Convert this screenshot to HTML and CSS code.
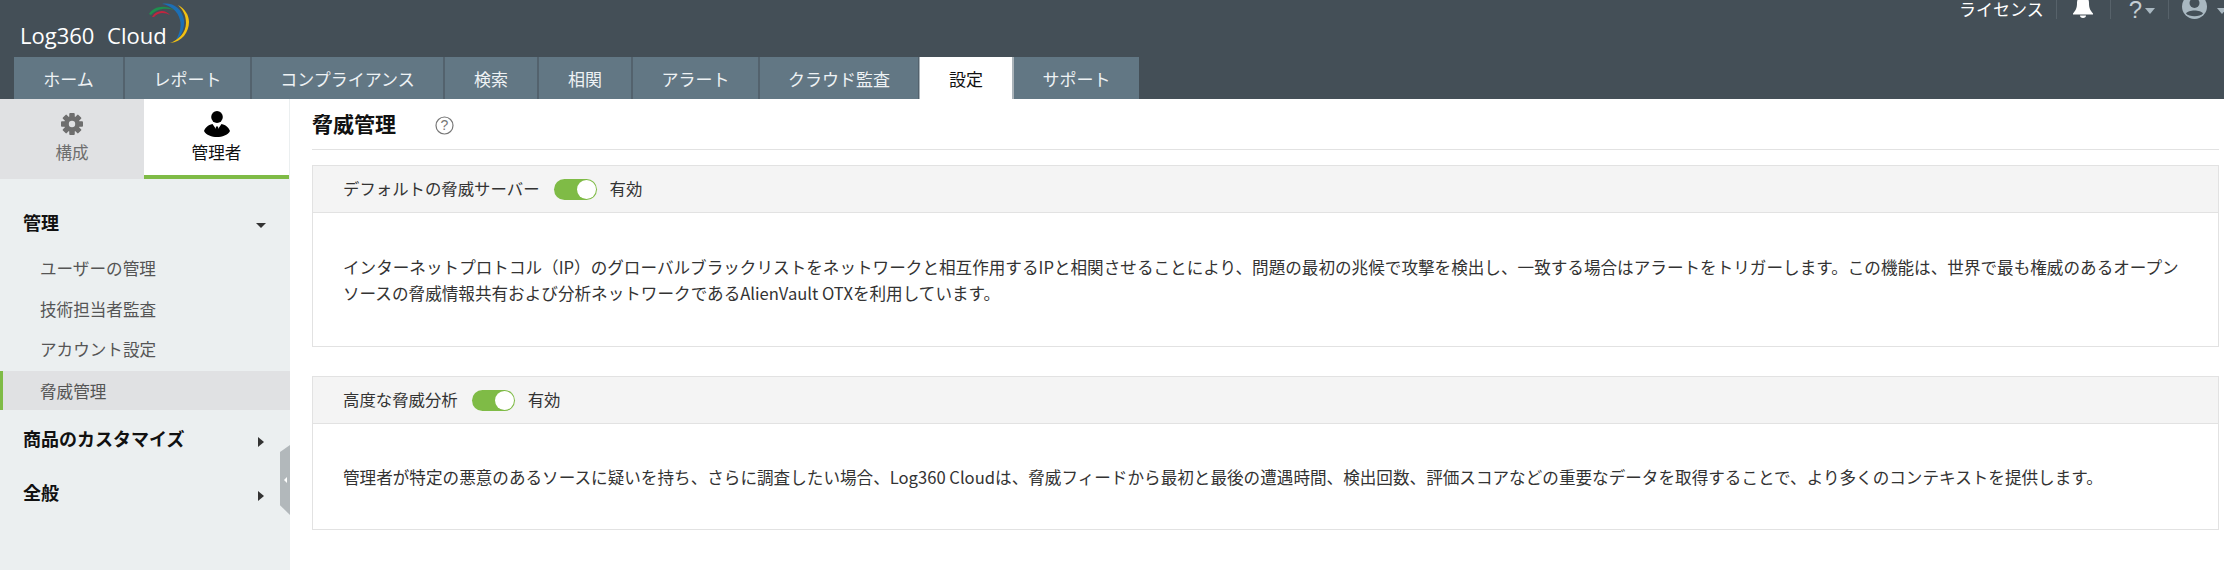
FILE: index.html
```html
<!DOCTYPE html>
<html lang="ja">
<head>
<meta charset="utf-8">
<title>Log360 Cloud</title>
<link rel="stylesheet" href="styles.css">
</head>
<body>
<header class="topbar">
  <div class="brand-row">
    <div class="logo">
      <span class="logo-text">Log360 Cloud</span>
      <svg class="logo-arc" width="60" height="50" viewBox="0 0 60 50">
        <path d="M9 14C13 7 24 4 34 10C24 7 15 10 11 15Z" fill="#1f8f4e"/>
        <path d="M12 17C16 10 25 9 30 15C25 12 18 12 14 17Z" fill="#c2253f"/>
        <path d="M22 4C32 2 42 8 44 20C45 28 41 37 35 42C39 35 42 27 40 20C38 11 30 5 22 4Z" fill="#1c6fb5"/>
        <path d="M38 5C45 9 49 15 49 22C49 32 42 42 30 43C38 40 46 33 46 23C46 15 43 10 38 5Z" fill="#f2c011"/>
      </svg>
    </div>
    <div class="top-actions">
      <span class="license">ライセンス</span>
      <span class="action-sep sep-a"></span>
      <svg class="bell" width="22" height="18" viewBox="0 0 22 18">
        <path d="M11 -4C15 -4 17 -1 17 3C17 8 18 10 21 13.500V14.500H1V13.500C4 10 5 8 5 3C5 -1 7 -4 11 -4Z" fill="#fff"/>
        <path d="M8 15.500H14C14 17 13 18 11 18C9 18 8 17 8 15.500Z" fill="#fff"/>
      </svg>
      <span class="action-sep sep-b"></span>
      <span class="help">?</span>
      <span class="caret"></span>
      <span class="action-sep sep-c"></span>
      <svg class="avatar" width="25" height="19" viewBox="0 0 25 19">
        <circle cx="12.500" cy="6.500" r="12.500" fill="#a9b8c1"/>
        <circle cx="12.500" cy="3" r="5" fill="#444f57"/>
        <path d="M4 13.500C6 9.500 19 9.500 21 13.500C18 17 7 17 4 13.500Z" fill="#444f57"/>
      </svg>
      <span class="caret caret-last"></span>
    </div>
  </div>
  <nav class="tabs">
    <a class="tab tab-s">ホーム</a>
    <a class="tab tab-m">レポート</a>
    <a class="tab tab-l">コンプライアンス</a>
    <a class="tab tab-xs">検索</a>
    <a class="tab tab-xs">相関</a>
    <a class="tab tab-m">アラート</a>
    <a class="tab tab-xl">クラウド監査</a>
    <a class="tab tab-xs active">設定</a>
    <a class="tab tab-m tab-last">サポート</a>
  </nav>
</header>
<div class="layout">
  <aside class="sidebar">
    <div class="side-tabs">
      <div class="side-tab">
        <svg width="24" height="22" viewBox="0 0 24 24">
          <g fill="#6e6e6e">
            <rect x="9" y="0" width="6" height="24" rx="1"/>
            <rect x="9" y="0" width="6" height="24" rx="1" transform="rotate(45 12 12)"/>
            <rect x="9" y="0" width="6" height="24" rx="1" transform="rotate(90 12 12)"/>
            <rect x="9" y="0" width="6" height="24" rx="1" transform="rotate(135 12 12)"/>
            <circle cx="12" cy="12" r="8.500"/>
          </g>
          <circle cx="12" cy="12" r="3.500" fill="#e0e1e3"/>
        </svg>
        <span>構成</span>
      </div>
      <div class="side-tab current">
        <svg width="26" height="26" viewBox="0 0 26 26">
          <ellipse cx="13" cy="6" rx="5.800" ry="6"/>
          <path d="M8.500 13L13 19.500L17.500 13C22 14 25 17 26 20C24 24 18 26 13 26C8 26 2 24 0 20C1 17 4 14 8.500 13Z"/>
          <path d="M12 15.500H14L15 21L13 23L11 21Z"/>
        </svg>
        <span>管理者</span>
      </div>
    </div>
    <div class="side-menu">
      <div class="group-head first"><span>管理</span><i class="tri-down"></i></div>
      <a class="item">ユーザーの管理</a>
      <a class="item">技術担当者監査</a>
      <a class="item">アカウント設定</a>
      <a class="item selected">脅威管理</a>
      <div class="group-head second"><span>商品のカスタマイズ</span><i class="tri-right"></i></div>
      <div class="group-head"><span>全般</span><i class="tri-right"></i></div>
    </div>
    <div class="collapse-handle"><i></i></div>
  </aside>
  <main class="content">
    <div class="page-head">
      <h1>脅威管理</h1>
      <svg class="help-icon" width="19" height="19" viewBox="0 0 19 19">
        <circle cx="9.500" cy="9.500" r="8.500" fill="none" stroke="#777" stroke-width="1.200"/>
        <text x="9.500" y="14" text-anchor="middle" class="help-q">?</text>
      </svg>
    </div>
    <section class="card card-one">
      <div class="card-head">
        <span class="head-label">デフォルトの脅威サーバー</span>
        <span class="toggle"><i></i></span>
        <span class="head-label">有効</span>
      </div>
      <div class="card-body body-one">
        <p>インターネットプロトコル（IP）のグローバルブラックリストをネットワークと相互作用するIPと相関させることにより、問題の最初の兆候で攻撃を検出し、一致する場合はアラートをトリガーします。この機能は、世界で最も権威のあるオープンソースの脅威情報共有および分析ネットワークであるAlienVault OTXを利用しています。</p>
      </div>
    </section>
    <section class="card card-two">
      <div class="card-head">
        <span class="head-label">高度な脅威分析</span>
        <span class="toggle"><i></i></span>
        <span class="head-label">有効</span>
      </div>
      <div class="card-body body-two">
        <p>管理者が特定の悪意のあるソースに疑いを持ち、さらに調査したい場合、Log360 Cloudは、脅威フィードから最初と最後の遭遇時間、検出回数、評価スコアなどの重要なデータを取得することで、より多くのコンテキストを提供します。</p>
      </div>
    </section>
  </main>
</div>
</body>
</html>
```
FILE: styles.css
```css
* { box-sizing: border-box; }
html, body { margin: 0; padding: 0; height: 100%; overflow: hidden; }
body {
  font-family: "Noto Sans CJK JP", "Noto Sans", "Liberation Sans", sans-serif;
  font-size: 16.6px;
  color: #222;
  background: #fff;
}
.topbar { height: 99px; background: #444f57; display: flex; flex-direction: column; }
.brand-row { height: 57px; display: flex; justify-content: space-between; }
.logo { position: relative; width: 200px; }
.logo-text {
  position: absolute; left: 20px; top: 22px;
  font-family: "Open Sans", "Liberation Sans", sans-serif;
  font-size: 22px; line-height: 26px; color: #fff; white-space: nowrap; word-spacing: 7px;
}
.logo-arc { position: absolute; left: 140px; top: 0; }
.top-actions { display: flex; align-items: flex-start; height: 20px; color: #fff; flex: none; width: 265px; }
.license { font-size: 17px; line-height: 17px; white-space: nowrap; color: #fff; flex: none; }
.action-sep { width: 1px; height: 19px; background: #57626a; flex: none; }
.sep-a { margin: 0 15px 0 12px; }
.sep-b { margin: 0 18px 0 16px; }
.sep-c { margin: 0 13px; }
.bell, .avatar { flex: none; }
.help { font-family: "Liberation Sans", sans-serif; font-size: 24px; line-height: 20px; color: #c5ced4; margin-right: 5px; width: 11px; flex: none; }
.caret { width: 0; height: 0; border: 5px solid transparent; border-top: 6px solid #a9b8c1; border-bottom: 0; margin-top: 8px; flex: none; }
.caret-last { margin-left: 10px; }
.tabs { height: 42px; margin-left: 14px; display: flex; }
.tab {
  flex: none; height: 42px; display: flex; align-items: center; justify-content: center;
  background: #627784; color: #eef2f4; font-size: 17px; white-space: nowrap;
  border-right: 2px solid #53626d;
}
.tab-s { width: 111px; }
.tab-m { width: 127px; }
.tab-l { width: 193px; }
.tab-xs { width: 94px; }
.tab-xl { width: 160px; }
.tab-last { width: 125px; border-right: 0; }
.tab.active { background: #fff; color: #111; border-right-color: #aab3b9; box-shadow: -1px 0 0 #aab3b9; }
.layout { display: flex; height: 471px; }
.sidebar { width: 290px; flex: none; background: #ebeff0; position: relative; }
.side-tabs { display: flex; height: 80px; }
.side-tab {
  width: 145px; flex: none; background: #e0e1e3; color: #6e6e6e; display: flex; flex-direction: column;
  align-items: center; line-height: 22px; padding-top: 14px;
}
.side-tab:first-child { width: 144px; }
.side-tab span { margin-top: 6px; }
.side-tab.current { background: #fff; color: #111; padding-top: 12px; border-bottom: 4px solid #7fbb46; }
.side-tab.current svg { fill: #000; }
.side-tab.current span { margin-top: 4px; }
.side-menu { display: flex; flex-direction: column; }
.group-head { display: flex; justify-content: space-between; align-items: center; height: 54px; padding: 0 26px 0 23px; font-weight: 700; color: #111; font-size: 18px; }
.group-head.first { height: 44px; margin: 21px 0 4px; }
.group-head.second { margin-top: 1px; }
.item { display: flex; align-items: center; height: 40.500px; padding-left: 40px; color: #555; }
.item.selected { background: #e0e1e3; border-left: 3px solid #7fbb46; padding-left: 37px; height: 39px; margin-top: 1.500px; }
.tri-down { width: 0; height: 0; border: 5px solid transparent; border-top: 5px solid #333; border-bottom: 0; margin-right: -2px; margin-top: 6px; }
.tri-right { width: 0; height: 0; border: 5px solid transparent; border-left: 6px solid #333; border-right: 0; margin-top: 8px; }
.collapse-handle {
  position: absolute; right: 0; top: 346px; width: 10px; height: 70px; background: #b2b8bb;
  clip-path: polygon(0 10%, 100% 0, 100% 100%, 0 86%);
  display: flex; align-items: center; justify-content: center;
}
.collapse-handle i { width: 0; height: 0; border: 3px solid transparent; border-right: 3px solid #fff; border-left: 0; }
.content { flex: 1; padding: 0 5px 0 22px; min-width: 0; }
.page-head { height: 51px; border-bottom: 1px solid #e2e2e2; display: flex; align-items: flex-start; }
.page-head h1 { margin: 0; font-size: 21px; line-height: 28px; padding-top: 10px; height: 38px; font-weight: 700; color: #111; }
.help-icon { margin-left: 39px; margin-top: 17px; }
.help-q { font-size: 14px; fill: #777; font-family: "Liberation Sans", sans-serif; }
.card { border: 1px solid #e2e2e2; }
.card-one { margin-top: 15px; height: 182px; }
.card-two { margin-top: 29px; height: 154px; }
.card-head { height: 47px; background: #f4f4f4; border-bottom: 1px solid #e2e2e2; display: flex; align-items: center; padding-left: 30px; color: #333; font-size: 16.4px; }
.head-label { padding-bottom: 3px; }
.toggle { width: 43px; height: 21px; border-radius: 11px; background: #7fbb46; margin: 0 13px 0 14px; position: relative; display: block; flex: none; }
.toggle i { position: absolute; right: 1px; top: 1px; width: 19px; height: 19px; border-radius: 50%; background: #fff; }
.card-body { padding: 0 30px; color: #333; }
.card-body p { margin: 0; line-height: 26px; }
.body-one { padding-top: 41px; }
.body-two { padding-top: 40px; }
```
